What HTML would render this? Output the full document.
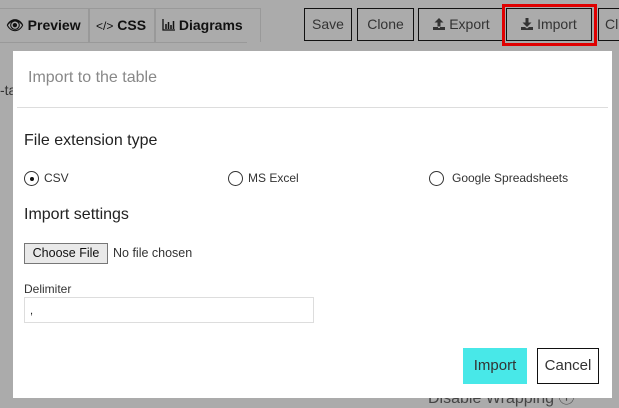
<!DOCTYPE html>
<html><head><style>
*{box-sizing:border-box;margin:0;padding:0}
body{width:619px;height:408px;overflow:hidden;background:#ababab;font-family:"Liberation Sans",sans-serif;position:relative;color:#222}
.a{position:absolute}
.tab{position:absolute;top:8px;height:34px;border:1px solid #999;border-bottom:none;font-weight:bold;font-size:14px;line-height:32px;padding-left:6px;color:#111}
.btn{position:absolute;top:8px;height:33px;border:1.5px solid #111;font-size:14px;line-height:30px;text-align:center;color:#333}
.modal{position:absolute;left:13px;top:51px;width:599px;height:347px;background:#fff}
.t{position:absolute;white-space:nowrap}
.radio{position:absolute;width:15px;height:15px;border:1px solid #333;border-radius:50%}
svg{vertical-align:-1px}
</style></head><body>
<div class="tab" style="left:-1px;width:90px">&#128065; Preview</div>
<div class="tab" style="left:89px;width:66px"><span style="font-weight:normal;font-size:12px">&lt;/&gt;</span> CSS</div>
<div class="tab" style="left:155px;width:106px"><svg width="13" height="12" viewBox="0 0 13 12"><path d="M1 0v11h12" stroke="#111" stroke-width="1.3" fill="none"/><path d="M4 5v5M6.5 3v7M9 6v4M11.5 2v8" stroke="#111" stroke-width="1.5"/></svg> Diagrams</div>
<div class="a" style="left:0;top:42px;width:247px;height:1px;background:#999"></div>
<div class="btn" style="left:304px;width:48px">Save</div>
<div class="btn" style="left:357px;width:57px">Clone</div>
<div class="btn" style="left:418px;width:87px"><svg width="12" height="12" viewBox="0 0 12 12"><path d="M6 0L1.5 4.5h3v4h3v-4h3z M0 9h5v1h2V9h5v3H0z" fill="#333"/></svg> Export</div>
<div class="a" style="left:502px;top:4px;width:95px;height:42px;border:3px solid #e00000"></div>
<div class="btn" style="left:506px;width:86px"><svg width="12" height="12" viewBox="0 0 12 12"><path d="M4.5 0h3v4.5h3L6 9 1.5 4.5h3z M0 9h4l2 1.5L8 9h4v3H0z" fill="#333"/></svg> Import</div>
<div class="btn" style="left:598px;width:40px;text-align:left;padding-left:6px">Cl</div>
<div class="t" style="left:0;top:82px;font-size:14px;color:#333">-ta</div>
<div class="t" style="left:428px;top:384px;font-size:16px;color:#444">Disable Wrapping &#9432;</div>
<div class="modal">
 <div class="t" style="left:15px;top:18px;font-size:16px;color:#888">Import to the table</div>
 <div class="a" style="left:4px;top:56px;width:591px;height:1px;background:#ddd"></div>
 <div class="t" style="left:11px;top:81px;font-size:16px;color:#222">File extension type</div>
 <div class="radio" style="left:11px;top:120px"><div class="a" style="left:4.5px;top:4.5px;width:4px;height:4px;background:#111;border-radius:50%"></div></div>
 <div class="t" style="left:31px;top:120px;font-size:12px;color:#333">CSV</div>
 <div class="radio" style="left:215px;top:120px"></div>
 <div class="t" style="left:235px;top:120px;font-size:12px;color:#333">MS Excel</div>
 <div class="radio" style="left:416px;top:120px"></div>
 <div class="t" style="left:439px;top:120px;font-size:12px;color:#333">Google Spreadsheets</div>
 <div class="t" style="left:11px;top:155px;font-size:16px;color:#222">Import settings</div>
 <div class="a" style="left:11px;top:192px;width:84px;height:21px;background:#e9e9e9;border:1px solid #777;font-size:12.5px;line-height:19px;text-align:center;color:#111">Choose File</div>
 <div class="t" style="left:100px;top:195px;font-size:12.5px;color:#333">No file chosen</div>
 <div class="t" style="left:11px;top:231px;font-size:12px;color:#333">Delimiter</div>
 <div class="a" style="left:11px;top:246px;width:290px;height:26px;border:1px solid #ddd;font-size:11px;padding:7px 0 0 5px">,</div>
 <div class="a" style="left:450px;top:297px;width:64px;height:36px;background:#48e8e8;font-size:15px;line-height:36px;text-align:center;color:#333">Import</div>
 <div class="a" style="left:524px;top:297px;width:62px;height:36px;border:1.5px solid #111;font-size:15px;line-height:33px;text-align:center;color:#333">Cancel</div>
</div>
</body></html>
